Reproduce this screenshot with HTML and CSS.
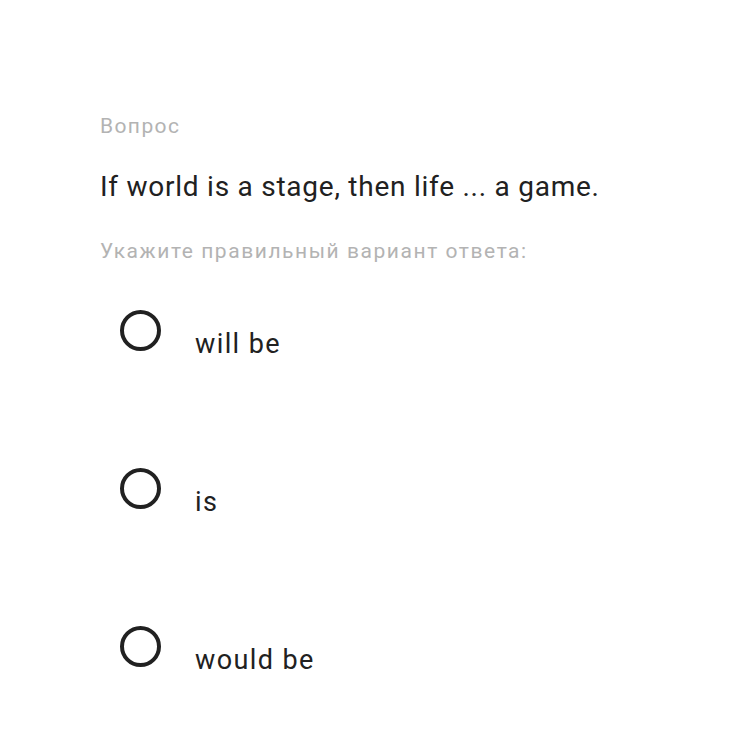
FILE: index.html
```html
<!DOCTYPE html>
<html lang="ru">
<head>
    <meta charset="utf-8" />
    <link rel="stylesheet" href="styles.css">
    <title>Вопрос</title>
</head>
<body>
    <div class="quiz">
        <div class="quiz-label">Вопрос</div>
        <div class="quiz-question">If world is a stage, then life ... a game.</div>
        <div class="quiz-hint">Укажите правильный вариант ответа:</div>
        <div class="options">
            <label class="option"><span class="radio"></span><span class="option-text">will be</span></label>
            <label class="option"><span class="radio"></span><span class="option-text">is</span></label>
            <label class="option"><span class="radio"></span><span class="option-text">would be</span></label>
        </div>
    </div>
</body>
</html>
```

FILE: styles.css
```css
body {
    margin: 0;
    background: #ffffff;
    font-family: Roboto, "Noto Sans", sans-serif;
}

.quiz {
    padding: 112px 0 0 100px;
}

.quiz-label {
    font-size: 21px;
    color: #b3b3b3;
    line-height: 28px;
    letter-spacing: 1.4px;
}

.quiz-question {
    margin-top: 29px;
    font-size: 28px;
    color: #212121;
    line-height: 36px;
    letter-spacing: 0.75px;
}

.quiz-hint {
    margin-top: 32px;
    font-size: 21px;
    color: #b3b3b3;
    line-height: 28px;
    letter-spacing: 1.55px;
}

.options {
    margin-top: 45px;
    display: flex;
    flex-direction: column;
    gap: 106px;
}

.option {
    display: flex;
    align-items: flex-start;
}

.radio {
    width: 33px;
    height: 33px;
    border: 4px solid #212121;
    border-radius: 50%;
    margin-left: 20px;
    flex: none;
}

.option-text {
    margin-left: 34px;
    margin-top: 16px;
    font-size: 27px;
    color: #212121;
    line-height: 36px;
    letter-spacing: 1.4px;
}
```
